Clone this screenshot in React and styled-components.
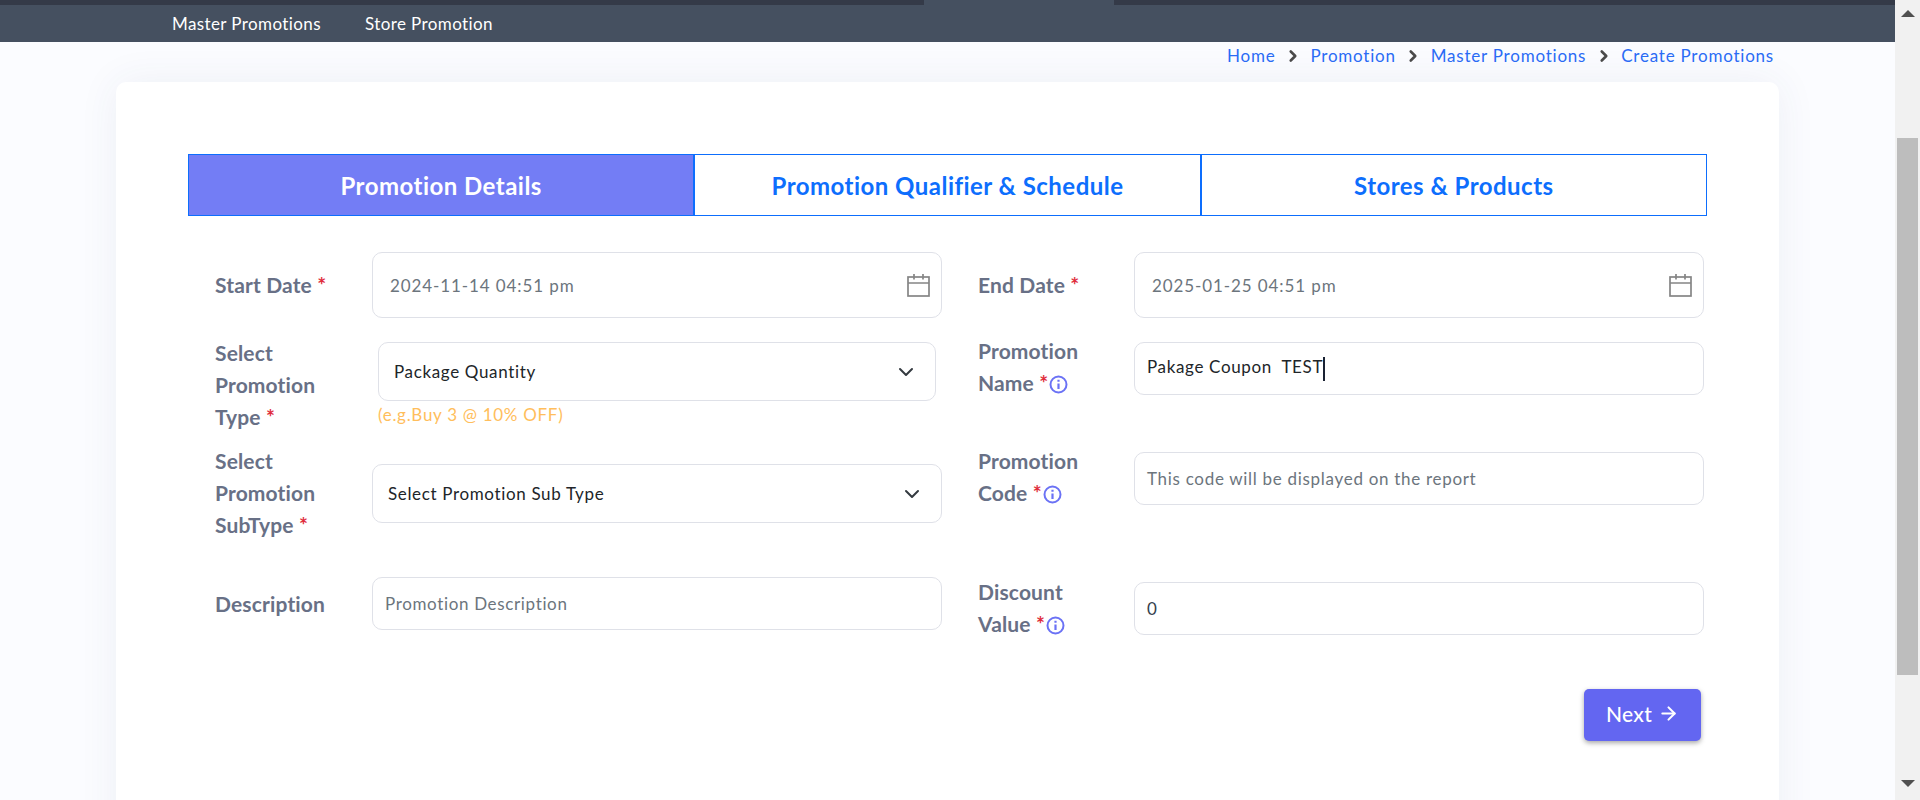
import React from "react";
import styled, { createGlobalStyle } from "styled-components";
import { ArrowRight, ChevronDown, ChevronRight } from "lucide-react";

const Global = createGlobalStyle`
  html, body { margin: 0; padding: 0; height: 100%; overflow: hidden; }
  body { font-family: "Lato", "Noto Sans", sans-serif; background: #fbfcff; }
  * { box-sizing: border-box; }
`;

const Shell = styled.div`
  display: grid;
  grid-template-columns: 1fr 25px;
  height: 800px;
  overflow: hidden;
`;
const Main = styled.main`
  min-width: 0;
  overflow: hidden;
  background: #fbfcff;
`;
const TopBar = styled.header`
  height: 42px;
  background: #455060;
  display: flex;
  flex-direction: column;
`;
const Strip = styled.div`
  height: 5px;
  display: flex;
`;
const StripPart = styled.div`
  background: ${p => (p.$gap ? "#455060" : "#343a48")};
  width: ${p => (p.$gap ? "190px" : "auto")};
  flex: ${p => (p.$gap ? "none" : 1)};
  &:first-child { flex: none; width: 924px; }
`;
const Menu = styled.nav`
  flex: 1;
  display: flex;
  align-items: center;
  gap: 44px;
  padding-left: 172px;
`;
const MenuLink = styled.a`
  color: #fff;
  font-size: 17px;
  letter-spacing: 0.4px;
`;
const Crumbs = styled.div`
  height: 27px;
  margin-bottom: 1px;
  display: flex;
  justify-content: flex-end;
  align-items: center;
  padding-right: 121px;
  gap: 8.5px;
`;
const Crumb = styled.a`
  color: #2a6bf5;
  font-size: 17px;
  letter-spacing: 0.78px;
`;
const CrumbSep = styled(ChevronRight)`
  color: #4a4a4a;
`;
const Card = styled.section`
  margin: 13px 116px 0 116px;
  background: #fff;
  border-radius: 10px;
  box-shadow: 0 0 40px rgba(60, 70, 110, 0.07);
  padding: 72px 72px 80px 72px;
  height: 900px;
`;
const Tabs = styled.div`
  display: grid;
  grid-template-columns: repeat(3, 1fr);
  height: 62px;
`;
const Tab = styled.div`
  display: flex;
  align-items: center;
  justify-content: center;
  border: 1px solid #0d6efd;
  background: ${p => (p.$active ? "#737df5" : "#fff")};
  color: ${p => (p.$active ? "#fff" : "#0d6efd")};
  font-size: 24px;
  letter-spacing: 0.47px;
  font-weight: 700;
`;
const Form = styled.div`
  display: grid;
  grid-template-columns: 727px 726px;
  column-gap: 36px;
  padding-left: 27px;
`;
const Column = styled.div`
  display: flex;
  flex-direction: column;
`;
const Field = styled.div`
  display: flex;
  align-items: ${p => (p.$top ? "flex-start" : "center")};
  margin-top: ${p => p.$mt}px;
`;
const Label = styled.label`
  flex: none;
  width: ${p => p.$w || 157}px;
  padding-right: 28px;
  color: #687086;
  font-size: 21px;
  letter-spacing: 0.15px;
  font-weight: 700;
  line-height: 32px;
`;
const Star = styled.span`
  color: #e02d3c;
`;
const Control = styled.div`
  flex: 1;
  position: relative;
  margin-top: ${p => p.$mt || 0}px;
  margin-left: ${p => p.$inset || 0}px;
  margin-right: ${p => p.$inset || 0}px;
`;
const Box = styled.div`
  height: ${p => p.$h}px;
  border: 1px solid #dfe1e8;
  border-radius: 10px;
  background: #fff;
  display: flex;
  align-items: center;
  justify-content: space-between;
  padding: 0 ${p => p.$pr || 13}px 0 ${p => p.$pl || 13}px;
  font-size: 17px;
  letter-spacing: ${p => p.$ls || 0.65}px;
  color: ${p => p.$color || "#212529"};
`;
const Caret = styled.span`
  display: inline-block;
  width: 2px;
  height: 24px;
  background: #1a2233;
  vertical-align: middle;
`;
const Hint = styled.div`
  color: #ffbe5c;
  font-size: 17px;
  letter-spacing: 0.7px;
  line-height: 24px;
  height: 24px;
  margin-top: 2px;
`;
const InfoWrap = styled.svg`
  display: inline-block;
  width: 19px;
  height: 19px;
  vertical-align: -3px;
  margin-left: 1px;
`;
const Actions = styled.div`
  display: flex;
  justify-content: flex-end;
  padding-right: 3px;
  margin-top: 49px;
`;
const NextButton = styled.button`
  width: 117px;
  height: 52px;
  border: 0;
  border-radius: 5px;
  padding: 0 0 4px;
  background: #6366f1;
  color: #fff;
  font: 500 21px "Lato", sans-serif;
  letter-spacing: 0.3px;
  display: flex;
  align-items: center;
  justify-content: center;
  gap: 6px;
  box-shadow: 0 2px 5px rgba(0, 0, 0, 0.35);
`;
const Scrollbar = styled.aside`
  background: #f1f1f1;
  display: flex;
  flex-direction: column;
  align-items: center;
  height: 800px;
`;
const Arrow = styled.div`
  width: 0;
  height: 0;
  border-left: 7px solid transparent;
  border-right: 7px solid transparent;
  ${p => (p.$down ? "border-top: 7px solid #505050;" : "border-bottom: 7px solid #505050;")}
  margin-top: ${p => p.$mt}px;
`;
const Thumb = styled.div`
  width: 21px;
  height: 537px;
  margin-top: ${p => p.$mt}px;
  background: #bdbdbd;
`;

const Info = () => (
  <InfoWrap viewBox="0 0 19 19" fill="none" stroke="#6b72f5" strokeWidth="2">
    <circle cx="9.5" cy="9.5" r="8" />
    <path d="M9.5 8.5v5.5M9.5 4.8v2" strokeWidth="2.2" />
  </InfoWrap>
);

const CalendarIcon = () => (
  <svg width="23" height="23" viewBox="0 0 23 23" fill="none" stroke="#858585" strokeWidth="1.7">
    <rect x="1" y="3" width="21" height="19" />
    <path d="M1 9h21M7 0v5.5M16 0v5.5" />
  </svg>
);

const Chevron = () => <ChevronDown size={24} strokeWidth={2} color="#343a40" />;

export default function App() {
  return (
    <Shell>
      <Global />
      <Main>
        <TopBar>
          <Strip>
            <StripPart />
            <StripPart $gap />
            <StripPart />
          </Strip>
          <Menu>
            <MenuLink>Master Promotions</MenuLink>
            <MenuLink>Store Promotion</MenuLink>
          </Menu>
        </TopBar>
        <Crumbs>
          <Crumb>Home</Crumb>
          <CrumbSep size={18} strokeWidth={3.5} />
          <Crumb>Promotion</Crumb>
          <CrumbSep size={18} strokeWidth={3.5} />
          <Crumb>Master Promotions</Crumb>
          <CrumbSep size={18} strokeWidth={3.5} />
          <Crumb>Create Promotions</Crumb>
        </Crumbs>
        <Card>
          <Tabs>
            <Tab $active>Promotion Details</Tab>
            <Tab>Promotion Qualifier &amp; Schedule</Tab>
            <Tab>Stores &amp; Products</Tab>
          </Tabs>
          <Form>
            <Column>
              <Field $mt={36}>
                <Label>Start Date <Star>*</Star></Label>
                <Control>
                  <Box $h={66} $pl={17} $pr={11} $ls={0.9} $color="#6c757d">
                    2024-11-14 04:51 pm
                    <CalendarIcon />
                  </Box>
                </Control>
              </Field>
              <Field $mt={19} $top>
                <Label>Select Promotion Type <Star>*</Star></Label>
                <Control $mt={5} $inset={6}>
                  <Box $h={59} $pl={15} $pr={17}>
                    Package Quantity
                    <Chevron />
                  </Box>
                  <Hint>(e.g.Buy 3 @ 10% OFF)</Hint>
                </Control>
              </Field>
              <Field $mt={12} $top>
                <Label>Select Promotion SubType <Star>*</Star></Label>
                <Control $mt={19}>
                  <Box $h={59} $pl={15} $pr={17}>
                    Select Promotion Sub Type
                    <Chevron />
                  </Box>
                </Control>
              </Field>
              <Field $mt={36}>
                <Label>Description</Label>
                <Control>
                  <Box $h={53} $pl={12} $color="#6c757d">Promotion Description</Box>
                </Control>
              </Field>
            </Column>
            <Column>
              <Field $mt={36}>
                <Label $w={156}>End Date <Star>*</Star></Label>
                <Control>
                  <Box $h={66} $pl={17} $pr={11} $ls={0.9} $color="#6c757d">
                    2025-01-25 04:51 pm
                    <CalendarIcon />
                  </Box>
                </Control>
              </Field>
              <Field $mt={17} $top>
                <Label $w={156}>Promotion Name <Star>*</Star><Info /></Label>
                <Control $mt={7}>
                  <Box $h={53} $pl={12}>
                    <span>Pakage Coupon&nbsp;&nbsp;TEST<Caret /></span>
                  </Box>
                </Control>
              </Field>
              <Field $mt={46} $top>
                <Label $w={156}>Promotion Code <Star>*</Star><Info /></Label>
                <Control $mt={7}>
                  <Box $h={53} $pl={12} $ls={0.7} $color="#6c757d">This code will be displayed on the report</Box>
                </Control>
              </Field>
              <Field $mt={67} $top>
                <Label $w={156}>Discount Value <Star>*</Star><Info /></Label>
                <Control $mt={6}>
                  <Box $h={53} $pl={12} $color="#343f4d">0</Box>
                </Control>
              </Field>
              <Actions>
                <NextButton>Next <ArrowRight size={21} strokeWidth={2.4} /></NextButton>
              </Actions>
            </Column>
          </Form>
        </Card>
      </Main>
      <Scrollbar>
        <Arrow $mt={10} />
        <Thumb $mt={121} />
        <Arrow $down $mt={105} />
      </Scrollbar>
    </Shell>
  );
}
